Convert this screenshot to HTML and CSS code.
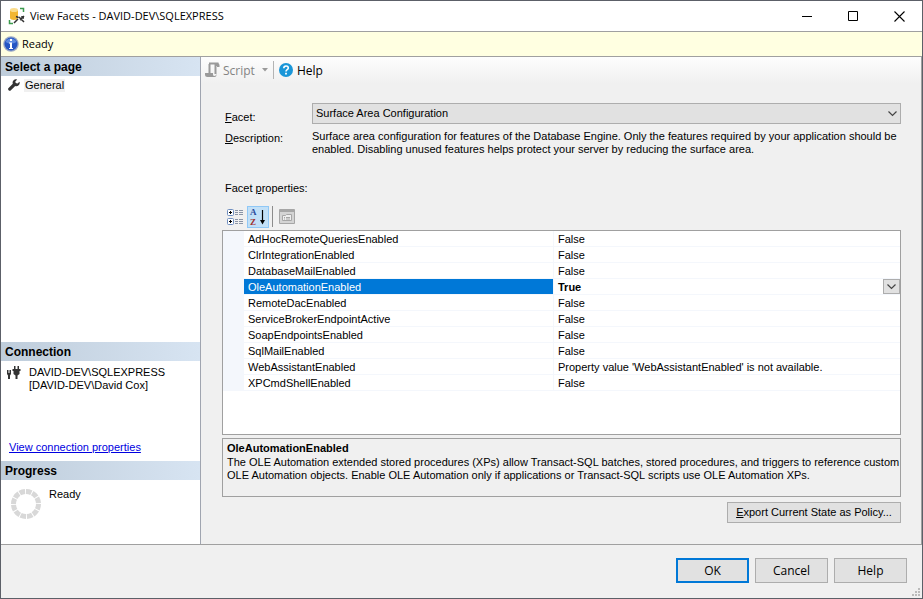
FILE: index.html
```html
<!DOCTYPE html>
<html lang="en">
<head>
  <meta charset="UTF-8" />
  <meta name="viewport" content="width=device-width, initial-scale=1.0" />
  <title>View Facets - DAVID-DEV\SQLEXPRESS</title>
  <link rel="stylesheet" href="styles.css">
</head>
<body>
  <div class="window">

    <header class="titlebar">
      <svg class="app-icon" width="18" height="18" viewBox="0 0 18 18">
        <path d="M2 3v8c0 2.600 8 2.600 8 0V3z" fill="#f2b632"/>
        <ellipse cx="6" cy="3" rx="4" ry="2" fill="#fbdc8a"/>
        <path d="M12 1.500h3.500V5M1.500 13v3.500H5" fill="none" stroke="#3c9a4e" stroke-width="1.500"/>
        <path d="M6 16l4-4M11 10l5 5M8 9.500l2.500 1M16 9l-4 4M14 9v2h2" fill="none" stroke="#333" stroke-width="1.500"/>
      </svg>
      <h1>View Facets - DAVID-DEV\SQLEXPRESS</h1>
      <div class="caption-buttons">
        <button type="button" aria-label="Minimize"><svg width="11" height="11" viewBox="0 0 11 11"><path d="M0 5.500h10" stroke="#000"/></svg></button>
        <button type="button" aria-label="Maximize"><svg width="11" height="11" viewBox="0 0 11 11"><path d="M.5.500h9v9h-9z" fill="none" stroke="#000"/></svg></button>
        <button type="button" aria-label="Close"><svg width="11" height="11" viewBox="0 0 11 11"><path d="M.5.500l10 10M10.500.500l-10 10" stroke="#000" stroke-width="1.100"/></svg></button>
      </div>
    </header>

    <div class="status">
      <svg width="16" height="16" viewBox="0 0 16 16">
        <circle cx="8" cy="8" r="7.800" fill="#9aa7c4"/>
        <circle cx="8" cy="8" r="6.500" fill="#2456c4"/>
        <path d="M2.500 6a6 6 0 0 1 11 0q-5.500 3-11 0z" fill="#5d8ae0"/>
        <path d="M7 3h2v2H7zM6 6.500h3V12h1v1H6v-1h1V7.500H6z" fill="#fff"/>
      </svg>
      <span>Ready</span>
    </div>

    <div class="main">
      <aside class="sidebar">
        <h2>Select a page</h2>
        <nav class="pages">
          <svg width="12" height="12" viewBox="0 0 12 12"><path d="M11.500 2.700 9.500 4.500 7.700 4 7.300 2.400 9.200.400A3.400 3.400 0 0 0 4.800 4.700L.600 8.900a1.500 1.500 0 0 0 2.300 2.300L7.200 7A3.400 3.400 0 0 0 11.500 2.700z" fill="#333"/></svg>
          <a href="#general">General</a>
        </nav>
        <h2>Connection</h2>
        <div class="connection">
          <div class="server">
            <svg width="15" height="15" viewBox="0 0 15 15">
              <path d="M1 4h1.500v3h1V4H5v4L4 9.500V13H2V9.500L1 8z" fill="#333"/>
              <path d="M8 0h1.500v3h2V0H13v3h1.500v2h-1v3l-2 1.500V13h-2V9.500L7.500 8V5h-1V3H8z" fill="#333"/>
            </svg>
            <p>DAVID-DEV\SQLEXPRESS<br>[DAVID-DEV\David Cox]</p>
          </div>
          <a href="#connection">View connection properties</a>
        </div>
        <h2>Progress</h2>
        <div class="progress">
          <svg width="34" height="32" viewBox="0 0 34 32">
            <circle cx="17" cy="16" r="12.500" fill="none" stroke="#d8d8d8" stroke-width="5" pathLength="120" stroke-dasharray="8.500 1.500"/>
          </svg>
          <span>Ready</span>
        </div>
      </aside>

      <section class="page" id="general">
        <div class="toolbar">
          <button type="button" class="script" disabled>
            <svg width="15" height="16" viewBox="0 0 15 16">
              <path d="M4 1.500h8.500V4M4.500 2v10.500M10.500 2v10" fill="none" stroke="#9a9a9a" stroke-width="2"/>
              <path d="M12 1q2.500 0 2.500 2.500V5H12zM0 11h8v1.500q0 1.500 1.500 1.500T11.500 12v1q0 2-2 2H2.500Q0 15 0 12.500z" fill="#9a9a9a"/>
            </svg>
            Script
            <svg class="arrow" width="6" height="4" viewBox="0 0 6 4"><path d="M0 0h6L3 3.500z" fill="#9a9a9a"/></svg>
          </button>
          <span class="sep"></span>
          <button type="button">
            <svg width="14" height="14" viewBox="0 0 14 14">
              <circle cx="7" cy="7" r="7" fill="#1a96d8"/>
              <path d="M4.800 5.300c0-3 4.500-3 4.500-.3C9.300 6.700 7 6.700 7 8.500" fill="none" stroke="#fff" stroke-width="1.600"/>
              <path d="M6.100 9.800h1.800v1.700H6.100z" fill="#fff"/>
            </svg>
            Help
          </button>
        </div>

        <div class="content">
          <div class="fields">
            <label for="facet"><u>F</u>acet:</label>
            <div class="combo">
              <select id="facet"><option>Surface Area Configuration</option></select>
              <svg width="9" height="6" viewBox="0 0 9 6"><path d="M.5.500l4 4 4-4" fill="none" stroke="#444" stroke-width="1.200"/></svg>
            </div>
            <span><u>D</u>escription:</span>
            <p>Surface area configuration for features of the Database Engine. Only the features required by your application should be enabled. Disabling unused features helps protect your server by reducing the surface area.</p>
          </div>

          <h3 id="props-label">Facet <u>p</u>roperties:</h3>
          <div class="grid-tools">
            <button type="button" aria-label="Categorized">
              <svg width="18" height="18" viewBox="0 0 18 18">
                <g fill="#fff" stroke="#6f8fc0"><rect x="1.500" y="1.500" width="6" height="6" rx="1"/><rect x="1.500" y="10.500" width="6" height="6" rx="1"/></g>
                <path d="M3 4.500h3M4.500 3v3M3 13.500h3M4.500 12v3" stroke="#000"/>
                <path d="M9 2.500h3M9 4.500h3M9 6.500h3M9 11.500h3M9 13.500h3M9 15.500h3M13 2.500h4M13 4.500h4M13 6.500h4M13 11.500h4M13 13.500h4M13 15.500h4" stroke="#8a94a6"/>
              </svg>
            </button>
            <button type="button" class="on" aria-label="Alphabetical">
              <svg width="18" height="20" viewBox="0 0 18 20">
                <text class="letter-a" x="1" y="8">A</text>
                <text class="letter-z" x="1" y="18">Z</text>
                <path d="M13.500 3v12" stroke="#000" stroke-width="1.200"/><path d="M11 13h5l-2.500 4.500z"/>
              </svg>
            </button>
            <span class="sep"></span>
            <button type="button" disabled aria-label="Property pages">
              <svg width="16" height="15" viewBox="0 0 16 15">
                <path d="M.5.500h15v14H.5z" fill="#d4d4d4" stroke="#a6a6a6"/>
                <path d="M1 2h14" stroke="#a6a6a6" stroke-width="2"/>
                <path d="M3.500 6.500h3l1-1h5v6h-9z" fill="#eee" stroke="#a6a6a6"/>
                <path d="M5 8.500h1M7 8.500h4M5 10h1M7 10h4" stroke="#a6a6a6"/>
              </svg>
            </button>
          </div>

          <div class="grid">
            <table aria-labelledby="props-label">
              <tr><th>AdHocRemoteQueriesEnabled</th><td>False</td></tr>
              <tr><th>ClrIntegrationEnabled</th><td>False</td></tr>
              <tr><th>DatabaseMailEnabled</th><td>False</td></tr>
              <tr class="selected">
                <th>OleAutomationEnabled</th>
                <td>
                  <div class="value">
                    True
                    <button type="button" aria-label="Choose value"><svg width="9" height="6" viewBox="0 0 9 6"><path d="M.5.500l4 4 4-4" fill="none" stroke="#444" stroke-width="1.200"/></svg></button>
                  </div>
                </td>
              </tr>
              <tr><th>RemoteDacEnabled</th><td>False</td></tr>
              <tr><th>ServiceBrokerEndpointActive</th><td>False</td></tr>
              <tr><th>SoapEndpointsEnabled</th><td>False</td></tr>
              <tr><th>SqlMailEnabled</th><td>False</td></tr>
              <tr><th>WebAssistantEnabled</th><td>Property value 'WebAssistantEnabled' is not available.</td></tr>
              <tr><th>XPCmdShellEnabled</th><td>False</td></tr>
            </table>
          </div>

          <div class="help-pane">
            <h4>OleAutomationEnabled</h4>
            <p>The OLE Automation extended stored procedures (XPs) allow Transact-SQL batches, stored procedures, and triggers to reference custom OLE Automation objects. Enable OLE Automation only if applications or Transact-SQL scripts use OLE Automation XPs.</p>
          </div>

          <button type="button" class="btn export"><span><u>E</u>xport Current State as Policy...</span></button>
        </div>
      </section>
    </div>

    <footer class="footer">
      <button type="button" class="btn default">OK</button>
      <button type="button" class="btn">Cancel</button>
      <button type="button" class="btn">Help</button>
      <svg class="grip" width="9" height="9" viewBox="0 0 9 9"><path d="M6 0h2v2H6zM3 3h2v2H3zM6 3h2v2H6zM0 6h2v2H0zM3 6h2v2H3zM6 6h2v2H6z" fill="#bbb"/></svg>
    </footer>
  </div>
</body>
</html>
```
FILE: styles.css
```css
* {
  box-sizing: border-box;
}
body {
  margin: 0;
  font-family: "Liberation Sans", Arial, sans-serif;
  font-size: 11px;
  line-height: 13px;
  color: #000;
}
h1, h2, h3, h4, p {
  margin: 0;
  font-size: inherit;
  font-weight: normal;
}
button {
  font: inherit;
  color: inherit;
  border: none;
  background: none;
  padding: 0;
}
svg {
  display: block;
  flex: none;
}
.window {
  display: flex;
  flex-direction: column;
  min-height: 100vh;
  border: 1px solid #5c6068;
  background: #f0f0f0;
}

/* Title bar */
.titlebar {
  display: flex;
  align-items: center;
  gap: 4px;
  height: 30px;
  padding-left: 7px;
  background: #fff;
  font-family: "Open Sans", "Segoe UI", sans-serif;
}
.titlebar h1 {
  flex: 1;
  line-height: 12px;
}
.caption-buttons {
  display: flex;
}
.caption-buttons button {
  display: grid;
  place-items: center;
  width: 46px;
  height: 30px;
}
.status {
  display: flex;
  align-items: center;
  gap: 3px;
  height: 26px;
  padding-left: 2px;
  background: #ffffe1;
  border-top: 1px solid #a0a0a0;
  border-bottom: 1px solid #a0a0a0;
  font-family: "Open Sans", "Segoe UI", sans-serif;
  line-height: 12px;
}
.main {
  flex: 1;
  display: grid;
  grid-template-columns: 200px 1fr;
  border-bottom: 1px solid #a0a0a0;
}

/* Left side */
.sidebar {
  display: flex;
  flex-direction: column;
  background: #fff;
  border-right: 1px solid #a0a5b0;
}
.sidebar h2 {
  height: 19px;
  padding: 0 4px;
  font-size: 12px;
  line-height: 21px;
  font-weight: bold;
  background: linear-gradient(to right, #bfcddb, #d7e4f2);
}
.pages {
  flex: 1;
  display: flex;
  align-items: flex-start;
  gap: 4px;
  padding: 3px 7px;
}
.pages a {
  padding: 0 1px;
  background: #f0f0f0;
  color: #000;
  text-decoration: none;
}
.connection {
  display: flex;
  flex-direction: column;
  justify-content: space-between;
  height: 100px;
  padding: 5px 8px 7px 5px;
}
.connection a {
  padding-left: 3px;
  color: #0000e0;
}
.server {
  display: flex;
  gap: 8px;
}
.progress {
  display: flex;
  gap: 6px;
  height: 64px;
  padding: 8px;
}

/* Right side */
.page {
  min-width: 0;
  border-right: 1px solid #a0a0a0;
}
.toolbar {
  display: flex;
  align-items: center;
  height: 26px;
  padding-left: 4px;
  background: linear-gradient(#fdfdfd, #f0f0f0);
  font-family: "Open Sans", "Segoe UI", sans-serif;
  font-size: 12px;
}
.toolbar button {
  display: flex;
  align-items: center;
  gap: 4px;
}
.toolbar .script {
  gap: 3px;
  color: #838383;
}
.arrow {
  margin-left: 4px;
}
.sep {
  width: 1px;
  height: 18px;
  margin: 0 5px;
  background: #b4b4b4;
}
.content {
  display: flex;
  flex-direction: column;
  padding: 20px 20px 20px 21px;
}
.fields {
  display: grid;
  grid-template-columns: 87px 1fr;
  row-gap: 6px;
  padding-left: 3px;
}
.fields label {
  padding-top: 8px;
}
.fields span {
  padding-top: 2px;
}
.combo {
  position: relative;
}
.combo select {
  display: block;
  width: 100%;
  height: 21px;
  padding: 0 3px;
  font: inherit;
  color: #000;
  background: #e1e1e1;
  border: 1px solid #adadad;
  border-radius: 0;
  appearance: none;
}
.combo svg {
  position: absolute;
  right: 4px;
  top: 8px;
  pointer-events: none;
}
.content h3 {
  padding: 26px 3px 9px;
}
.grid-tools {
  display: flex;
  align-items: center;
  gap: 1px;
  height: 25px;
  padding-left: 2px;
}
.grid-tools button {
  display: grid;
  place-items: center;
  width: 22px;
  height: 22px;
}
.grid-tools .on {
  background: #c2e0f7;
  border: 1px solid #90c8f6;
}
.grid-tools .sep {
  height: 21px;
  margin: 0 2px;
  background: #8c8c8c;
}
.letter-a,
.letter-z {
  font-family: "Liberation Serif", serif;
  font-size: 9px;
  font-weight: bold;
  fill: #2a4b9b;
}
.letter-z {
  fill: #a03030;
}

/* Property grid */
.grid {
  height: 205px;
  margin-top: 1px;
  border: 1px solid #a0a0a0;
  background: #fff;
}
.grid table {
  width: 100%;
  table-layout: fixed;
  border-collapse: separate;
  border-spacing: 0;
  border-left: 21px solid #f4f7fc;
}
.grid th,
.grid td {
  height: 16px;
  padding: 1px 4px 0;
  border-bottom: 1px solid #f4f7fc;
  line-height: 14px;
  font-weight: normal;
  text-align: left;
}
.grid th {
  width: 310px;
  border-right: 1px solid #f4f7fc;
}
.grid .selected th {
  background: #0078d7;
  color: #fff;
}
.grid .selected td {
  padding: 0 0 0 4px;
  font-weight: bold;
}
.value {
  display: flex;
  justify-content: space-between;
  align-items: center;
}
.value button {
  display: grid;
  place-items: center;
  width: 17px;
  height: 15px;
  background: #e1e1e1;
  border: 1px solid #adadad;
}
.help-pane {
  height: 59px;
  margin-top: 3px;
  padding: 2px 0 2px 4px;
  border: 1px solid #a0a0a0;
}
.help-pane h4 {
  font-weight: bold;
  line-height: 15px;
}

/* Buttons */
.btn {
  height: 25px;
  width: 73px;
  background: #e1e1e1;
  border: 1px solid #adadad;
}
.btn.export {
  align-self: flex-end;
  width: 174px;
  height: 21px;
  margin-top: 5px;
}
.btn.default {
  border: 2px solid #0078d7;
}
.footer {
  position: relative;
  display: flex;
  justify-content: flex-end;
  gap: 6px;
  padding: 13px 15px 15px;
  font-family: "Open Sans", "Segoe UI", sans-serif;
  font-size: 12px;
}
.grip {
  position: absolute;
  right: 1px;
  bottom: 1px;
}
```
